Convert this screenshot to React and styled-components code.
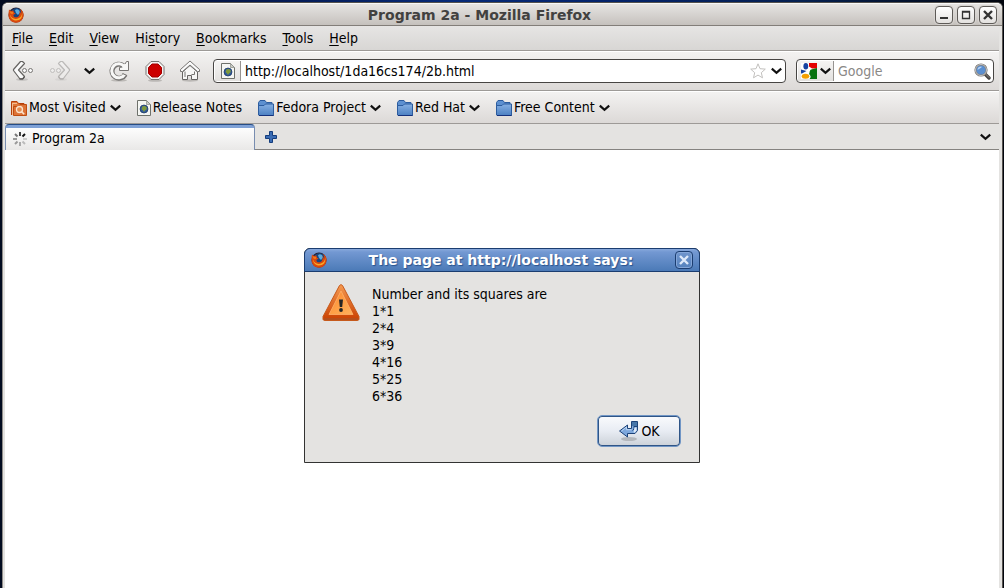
import React from "react";
import styled, { createGlobalStyle, css } from "styled-components";

const GlobalStyle = createGlobalStyle`
  * { box-sizing: border-box; }
  html, body, #root { height: 100%; margin: 0; }
  body, button, input {
    font-family: "DejaVu Sans Condensed", "DejaVu Sans", sans-serif;
    font-size: 14px;
    line-height: 17px;
    color: #000;
  }
  button { padding: 0; border: 0; background: none; }
  input { padding: 0; border: 0; outline: 0; background: none; min-width: 0; }
  svg { display: block; flex: none; }
`;

const Desktop = styled.div`
  min-height: 100%;
  display: flex;
  padding: 2px 1px 0 2px;
  background: linear-gradient(90deg, #020b20, #04184e 25%, #062a78 45%, #04236b 60%, #052050 80%, #01040c);
`;

const Window = styled.div`
  flex: 1;
  display: flex;
  flex-direction: column;
  border: 1px solid #55524e;
  border-left-color: #8e8b88;
  border-bottom: 0;
  border-radius: 6px 6px 0 0;
  background: #e4e3e1;
`;

const TitleBar = styled.header`
  display: flex;
  align-items: center;
  height: 23px;
  padding: 0 5px;
  gap: 5px;
  border-top: 1px solid #f8f8f7;
  border-bottom: 1px solid #827e79;
  border-radius: 5px 5px 0 0;
  background: linear-gradient(#e6e4e2, #c5c1bd);
`;

const WindowTitle = styled.h1`
  flex: 1;
  margin: 0;
  font-family: "DejaVu Sans", sans-serif;
  font-size: 14px;
  line-height: 18px;
  font-weight: bold;
  text-align: center;
  color: #424140;
`;

const WindowButton = styled.button`
  display: grid;
  place-items: center;
  width: 18px;
  height: 18px;
  border: 1px solid #5e5b58;
  border-radius: 4px;
  background: linear-gradient(#fff, #e3e1df);
  box-shadow: 0 0 0 1px #d8d5d2;
`;

const WindowButtons = styled.div`
  display: flex;
  gap: 4px;
`;

const Frame = styled.div`
  flex: 1;
  display: flex;
  flex-direction: column;
  margin: 0 3px 0 2px;
`;

const Bar = styled.div`
  display: flex;
  align-items: center;
  height: ${(p) => p.$height}px;
  border-bottom: 1px solid #9d9a97;
  background: linear-gradient(#f3f2f1, #dcd9d7);
`;

const MenuBar = styled(Bar).attrs({ as: "nav" })`
  background: linear-gradient(#e6e5e4, #d8d6d4);
`;

const MenuItem = styled.button`
  padding: 0 9px 0 7px;
  u { text-underline-offset: 2px; }
`;

const NavBar = styled(Bar)`
  border-top: 1px solid #fff;
  padding: 0 5px 0 6px;
`;

const NavButton = styled.button`
  display: grid;
  place-items: center;
  width: ${(p) => p.$width}px;
  height: 26px;
`;

const Field = styled.form`
  display: flex;
  align-items: center;
  height: 24px;
  border: 1px solid #474543;
  border-radius: 4px;
  background: #fff;
  overflow: hidden;
  ${(p) => (p.$wide ? css`flex: 1;` : css`flex: 0 0 198px; margin-left: 10px;`)}
  input { flex: 1; }
  input::placeholder { color: #8a8886; opacity: 1; }
`;

const FieldButton = styled.button`
  display: flex;
  align-items: center;
  justify-content: center;
  gap: 3px;
  width: ${(p) => p.$width}px;
  height: 20px;
  flex: none;
`;

const Identity = styled(FieldButton)`
  margin: 0 4px 0 1px;
  border-right: 1px solid #979491;
  background: linear-gradient(#f5f4f3, #e3e1df);
`;

const BookmarkBar = styled(Bar)`
  border-top: 1px solid #fff;
  padding-left: 6px;
  gap: 16px;
`;

const Bookmark = styled.button`
  display: flex;
  align-items: center;
  gap: 2px;
`;

const BookmarkLabel = styled.span`
  padding-right: ${(p) => (p.$menu ? 2 : 0)}px;
`;

const TabBar = styled.div`
  display: flex;
  height: 26px;
  background: linear-gradient(#e4e3e1 25px, #858380 25px);
`;

const Tab = styled.button`
  display: flex;
  align-items: center;
  gap: 5px;
  width: 250px;
  padding: 2px 0 0 7px;
  border: 1px solid #788db0;
  border-top: 1px solid #274d86;
  border-bottom: 0;
  border-radius: 4px 4px 0 0;
  background: linear-gradient(#7fa1d6 0 3px, #fdfdfd 3px, #e9e8e7);
`;

const NewTab = styled.button`
  display: grid;
  place-items: center;
  width: 32px;
`;

const AllTabs = styled(NewTab)`
  width: 28px;
  margin-left: auto;
`;

const Page = styled.main`
  flex: 1;
  display: flex;
  justify-content: center;
  align-items: flex-start;
  padding: 98px 0 40px;
  background: #fff;
`;

const Dialog = styled.section`
  width: 396px;
  border: 1px solid #333332;
  border-radius: 6px 6px 0 0;
  background: #e4e3e1;
`;

const DialogTitleBar = styled.header`
  display: flex;
  align-items: center;
  height: 24px;
  margin: -1px -1px 0;
  padding: 0 6px;
  border: 1px solid #1b3d70;
  border-radius: 6px 6px 0 0;
  background: linear-gradient(#88a9dc, #7398d2 3px, #4b7ab7);
`;

const DialogTitle = styled(WindowTitle).attrs({ as: "h2" })`
  color: #fff;
  text-shadow: 1px 1px 1px #28528d;
`;

const DialogClose = styled.button`
  display: grid;
  place-items: center;
  width: 18px;
  height: 18px;
  border: 1px solid #1b3d70;
  border-radius: 4px;
  background: linear-gradient(#7095cd, #5582bd);
  box-shadow: inset 0 0 0 1px #84a6d8;
`;

const DialogBody = styled.div`
  display: flex;
  gap: 12px;
  padding: 12px 17px 0;
`;

const Message = styled.p`
  margin: 2px 0 10px;
  white-space: pre-line;
`;

const DialogActions = styled.footer`
  display: flex;
  justify-content: flex-end;
  padding: 0 18px 15px;
`;

const OkButton = styled.button`
  display: flex;
  align-items: center;
  justify-content: center;
  gap: 1px;
  width: 84px;
  height: 32px;
  border: 1px solid #7196c5;
  border-radius: 5px;
  background: linear-gradient(#fafbfd, #e8ecf3 50%, #cbd1d8);
  box-shadow: inset 0 0 0 1px #2f5587;
`;

const Chevron = () => (
  <svg width="11" height="8" viewBox="0 0 11 8" fill="none" stroke="#111" strokeWidth="2.2">
    <path d="M.8 1.600 5.500 5.800 10.200 1.600" />
  </svg>
);

const Firefox = () => (
  <svg width="16" height="16" viewBox="0 0 16 16">
    <circle cx="8" cy="8" r="7.5" fill="#2a1b27" />
    <circle cx="8.4" cy="7" r="6" fill="#16457f" />
    <path d="M7 3.3C9 1 12 3 12 5.500L10 8 8 6Z" fill="#58abe0" />
    <path d="M1 2.500 3 4c1-1 2.500-.6 3 .1C5 5 5.700 6 7.500 6.200 7 7.500 5.600 7 5.400 8.400c.5 2.400 4 2.500 5.500.3 1-1.400.8-3.400.2-4.700C12 4.500 13 6 13 7c.6-2-.2-4-1.400-5.300C15 3.500 16 6 15.500 9 14.800 13 12 15.700 8 15.700 3.500 15.700.5 12.300.5 8c0-2 .3-4 .5-5.500Z" fill="#d9480f" />
    <path d="M14.200 5.500c.8 5-2 8-6 8C4.800 13.500 2 11 2.100 7.500c.8 3 3 4.500 5.700 4.400 4-.2 6.200-2.500 6.400-6.400Z" fill="#f9a825" />
    <path d="M1.400 4 3 4.800 5.500 5 4.700 7l-2-.3Z" fill="#f27a1a" />
  </svg>
);

const Globe = () => (
  <svg width="14" height="16" viewBox="0 0 14 16">
    <path d="M.5.5h9l4 4v11H.5Z" fill="#f5f6f3" stroke="#6e716b" />
    <path d="M9.500.5v4h4Z" fill="#c9cbc6" stroke="#8a8d87" strokeWidth=".7" />
    <circle cx="7" cy="9" r="4" fill="#315a9c" stroke="#1a335f" strokeWidth=".7" />
    <path d="M5.500 6.300 8 6l1.800 1.500-.3 2L8 10.500 7 12 6 10.500 4.500 9Z" fill="#7f9a3c" />
  </svg>
);

const Folder = () => (
  <svg width="16" height="16" viewBox="0 0 16 16">
    <defs>
      <linearGradient id="folder" x2="0" y2="1"><stop stopColor="#86b0e3" /><stop offset="1" stopColor="#4c80c2" /></linearGradient>
    </defs>
    <path d="M.5 14.500v-12l1.500-2h5l1.500 2H14v4" fill="#5d90d0" stroke="#2c5c9f" />
    <path d="M.5 15V5.500H6L7.500 4h8v11.500H1Z" fill="url(#folder)" stroke="#2c5c9f" />
    <path d="M1 15.500h14.500" stroke="#15317c" />
  </svg>
);

const SmartFolder = () => (
  <svg width="16" height="16" viewBox="0 0 16 16">
    <path d="M.5 15V1.500h5.500l1.500 2h5.500V6" fill="#e07638" stroke="#b6400b" />
    <path d="M2.500 15.500v-9h5L9 4.500h6.500v11Z" fill="#dd7337" stroke="#c04c10" />
    <path d="M1.500 3v12M2 3.500h4" stroke="#f5bd91" />
    <circle cx="8.500" cy="9.500" r="3" fill="#e58c50" stroke="#fbe3cd" strokeWidth="1.300" />
    <path d="m10.600 11.600 2.600 2.600" stroke="#fbe3cd" strokeWidth="1.600" />
  </svg>
);

const Back = ({ faded }) => (
  <svg width="24" height="22" viewBox="0 0 24 22" opacity={faded ? 0.35 : 1}>
    <g transform={faded ? "translate(24 0) scale(-1 1)" : "translate(1 0)"}>
      <ellipse cx="10" cy="19.500" rx="6" ry="1.500" fill="#77757344" />
      <path d="m10.500 1.500 2 2L6.500 10l6 6.500-2 2.500H8L1.500 10.500v-1l7-8Z" fill="#fafafa" stroke="#666462" strokeWidth="1.200" strokeLinejoin="round" />
      <path d="M7.500 18.800h3.300l1.800-2.200" fill="none" stroke="#555351" strokeWidth="1.300" />
      <circle cx="12.500" cy="10.500" r="2" fill="#fafafa" stroke="#777573" />
      <circle cx="18.500" cy="10.500" r="2" fill="#fafafa" stroke="#777573" />
    </g>
  </svg>
);

const Reload = () => (
  <svg width="22" height="22" viewBox="0 0 22 22">
    <ellipse cx="11" cy="20.300" rx="8" ry="1.300" fill="#bbb8b5" />
    <path d="M15.200 5.600A7 7 0 1 0 17.200 14.500" fill="none" stroke="#777573" strokeWidth="5" />
    <path d="M17 4 18.500 1.500H20.500v9H11.500V7.500l3-.5" fill="#f7f7f6" stroke="#777573" strokeLinejoin="round" />
    <path d="M16.500 6.800A7 7 0 1 0 16.800 14.200" fill="none" stroke="#f7f7f6" strokeWidth="3" />
    <path d="m14.500 13.500 4.500 2" stroke="#777573" />
  </svg>
);

const Stop = () => (
  <svg width="22" height="22" viewBox="0 0 22 22">
    <ellipse cx="11" cy="20.500" rx="7" ry="1.300" fill="#bbb8b5" />
    <path d="M7 1.500h8l5 5v8l-5 5H7l-5-5v-8Z" fill="#f3f2f1" stroke="#777573" />
    <path d="M8 4h6l3.500 3.500v6L14 17H8l-3.500-3.500v-6Z" fill="#cc0000" stroke="#a40000" />
  </svg>
);

const Home = () => (
  <svg width="22" height="22" viewBox="0 0 22 22">
    <ellipse cx="11" cy="20.500" rx="8" ry="1.200" fill="#bbb8b5" />
    <path d="M3.500 12v7.500h5v-4h4v4h6V12L11 5.500Z" fill="#f7f7f6" stroke="#666462" />
    <path d="M1.500 11.500v-2L11 1l9.500 8.500v2h-2L11 5l-7.500 6.500Z" fill="#fafafa" stroke="#777573" strokeLinejoin="round" />
    <path d="M6 11.500v5.500M15.500 11.500v3h-3" fill="none" stroke="#777573" />
  </svg>
);

const Star = () => (
  <svg width="16" height="16" viewBox="0 0 16 16">
    <path d="m8 .8 2 4.900 5.300.4-4 3.600 1.200 5.100L8 12.100l-4.500 2.700 1.200-5.100-4-3.600L6 5.700Z" fill="#fff" stroke="#c2c0be" strokeLinejoin="round" />
  </svg>
);

const Google = () => (
  <svg width="16" height="16" viewBox="0 0 16 16">
    <path d="M0 0h16v16H0Z" fill="#fff" />
    <path d="M8 0h8v5.500h-5L8 3.500Z" fill="#e40000" />
    <path d="M16 5v11H8.500c2-2 1-3.500-.5-5 1-1 0-3 2-4.500Z" fill="#087210" />
    <ellipse cx="4.800" cy="3.300" rx="2.400" ry="3.200" fill="#1743a1" />
    <path d="M0 6.500 5.500 8 1 10.500H0Z" fill="#1743a1" />
    <ellipse cx="4.500" cy="13.300" rx="3.800" ry="2.500" fill="#f5a000" />
  </svg>
);

const Magnifier = () => (
  <svg width="17" height="17" viewBox="0 0 17 17">
    <path d="m10.500 10.500 4.500 4.500" stroke="#454341" strokeWidth="3.400" strokeLinecap="round" />
    <path d="m11 10.500 4 4" stroke="#8b8987" strokeLinecap="round" />
    <circle cx="7" cy="7" r="5.600" fill="#5b8fd0" stroke="#777573" strokeWidth="2" />
    <circle cx="7" cy="7" r="5.500" fill="none" stroke="#d9d8d6" strokeWidth=".8" />
    <path d="M3.500 7C3.500 4.500 5 3.500 7.500 3.500c1 1-2 2-4 3.500Z" fill="#b5d1f2" />
  </svg>
);

const Spinner = () => (
  <svg width="14" height="14" viewBox="0 0 14 14" strokeWidth="2">
    <path d="M7 0v4" stroke="#444" />
    <path d="m12 2-2.500 2.500" stroke="#111" />
    <path d="M14 7h-4" stroke="#ccc" />
    <path d="M12 12 9.500 9.500" stroke="#bbb" />
    <path d="M7 14v-4" stroke="#aaa" />
    <path d="m2 12 2.500-2.500" stroke="#999" />
    <path d="M0 7h4" stroke="#999" />
    <path d="m2 2 2.500 2.500" stroke="#777" />
  </svg>
);

const Plus = () => (
  <svg width="12" height="12" viewBox="0 0 12 12">
    <path d="M4.500.5h3v4h4v3h-4v4h-3v-4h-4v-3h4Z" fill="#3a6cb4" stroke="#143d7c" />
  </svg>
);

const Warning = () => (
  <svg width="38" height="38" viewBox="0 0 38 38">
    <defs>
      <linearGradient id="warnEdge" x2="0" y2="1"><stop stopColor="#f59a50" /><stop offset="1" stopColor="#c93f00" /></linearGradient>
      <linearGradient id="warnFill" x2="1" y2="1"><stop stopColor="#f5802c" /><stop offset=".5" stopColor="#ff9f45" /><stop offset="1" stopColor="#fdb25e" /></linearGradient>
    </defs>
    <path d="M17.500 1.500c.6-1 2.400-1 3 0l16.500 31V35c0 1-1 1.500-2 1.500H3C2 36.500 1 36 1 35v-2.500Z" fill="url(#warnEdge)" stroke="#c65a1c" />
    <path d="M2 35h34" stroke="#b5501c" strokeWidth="2" />
    <path d="m19 7 12 23.500H7Z" fill="url(#warnFill)" stroke="#ffb36c" strokeWidth=".8" strokeLinejoin="round" />
    <path d="M17 15.500h4l-.8 7.500h-2.400Z" fill="#252525" />
    <circle cx="19" cy="26" r="1.900" fill="#252525" />
  </svg>
);

const Enter = () => (
  <svg width="22" height="22" viewBox="0 0 22 22">
    <ellipse cx="11" cy="19" rx="8" ry="2" fill="#b3b7bc" />
    <path d="M13.500 1.500h6v9l-2.500 3H9.500v3.500L1.500 11l8-6v3.500h4Z" fill="#7da7dc" stroke="#1d4379" strokeLinejoin="round" />
    <path d="M14 2h5v4h-5Z" fill="#4676a9" />
    <path d="M16 6.500h3M16 6v3l-1.500 1.500" fill="none" stroke="#1d4379" />
    <path d="M16.500 7.500h2v3L17 12.500h-1.500Z" fill="#dfeaf7" />
    <path d="M3.500 11 8.500 7v2.700h5" fill="none" stroke="#bcd5f2" />
  </svg>
);

const Cross = ({ color }) => (
  <svg width="10" height="10" viewBox="0 0 10 10">
    <path d="m1 1 8 8M9 1 1 9" stroke={color} strokeWidth="2.400" />
  </svg>
);

const MENUS = [
  ["", "F", "ile"],
  ["", "E", "dit"],
  ["", "V", "iew"],
  ["Hi", "s", "tory"],
  ["", "B", "ookmarks"],
  ["", "T", "ools"],
  ["", "H", "elp"],
];

const BOOKMARKS = [
  { label: "Most Visited", icon: <SmartFolder />, menu: true },
  { label: "Release Notes", icon: <Globe /> },
  { label: "Fedora Project", icon: <Folder />, menu: true },
  { label: "Red Hat", icon: <Folder />, menu: true },
  { label: "Free Content", icon: <Folder />, menu: true },
];

const MESSAGE = ["Number and its squares are", "1*1", "2*4", "3*9", "4*16", "5*25", "6*36"].join("\n");

export default function App() {
  return (
    <Desktop>
      <GlobalStyle />
      <Window>
        <TitleBar>
          <Firefox />
          <WindowTitle>Program 2a - Mozilla Firefox</WindowTitle>
          <WindowButtons>
            <WindowButton aria-label="Minimize">
              <svg width="10" height="10" viewBox="0 0 10 10"><path d="M1 8h8" stroke="#333" strokeWidth="2" /></svg>
            </WindowButton>
            <WindowButton aria-label="Maximize">
              <svg width="10" height="10" viewBox="0 0 10 10"><path d="M1.500 1.500h7v7h-7ZM1 2h8" fill="none" stroke="#333" strokeWidth="1.300" /></svg>
            </WindowButton>
            <WindowButton aria-label="Close"><Cross color="#333" /></WindowButton>
          </WindowButtons>
        </TitleBar>
        <Frame>
          <MenuBar $height={25}>
            {MENUS.map(([before, key, after]) => (
              <MenuItem key={after}>{before}<u>{key}</u>{after}</MenuItem>
            ))}
          </MenuBar>
          <NavBar $height={40}>
            <NavButton $width={24} aria-label="Back"><Back /></NavButton>
            <NavButton $width={48} aria-label="Forward"><Back faded /></NavButton>
            <NavButton $width={12} aria-label="History list"><Chevron /></NavButton>
            <NavButton $width={48} aria-label="Reload"><Reload /></NavButton>
            <NavButton $width={24} aria-label="Stop"><Stop /></NavButton>
            <NavButton $width={46} aria-label="Home"><Home /></NavButton>
            <Field $wide>
              <Identity type="button" $width={26} aria-label="Site identity"><Globe /></Identity>
              <input aria-label="Address" defaultValue="http://localhost/1da16cs174/2b.html" />
              <FieldButton type="button" $width={18} aria-label="Bookmark this page"><Star /></FieldButton>
              <FieldButton type="button" $width={18} aria-label="Show history"><Chevron /></FieldButton>
            </Field>
            <Field>
              <Identity type="button" $width={36} aria-label="Search engine"><Google /><Chevron /></Identity>
              <input aria-label="Search" placeholder="Google" />
              <FieldButton $width={22} aria-label="Search"><Magnifier /></FieldButton>
            </Field>
          </NavBar>
          <BookmarkBar $height={33}>
            {BOOKMARKS.map(({ label, icon, menu }) => (
              <Bookmark key={label}>{icon}<BookmarkLabel $menu={menu}>{label}</BookmarkLabel>{menu && <Chevron />}</Bookmark>
            ))}
          </BookmarkBar>
          <TabBar>
            <Tab><Spinner /><span>Program 2a</span></Tab>
            <NewTab aria-label="New tab"><Plus /></NewTab>
            <AllTabs aria-label="List all tabs"><Chevron /></AllTabs>
          </TabBar>
          <Page>
            <Dialog role="alertdialog" aria-labelledby="dialog-title" aria-describedby="dialog-message">
              <DialogTitleBar>
                <Firefox />
                <DialogTitle id="dialog-title">The page at http://localhost says:</DialogTitle>
                <DialogClose aria-label="Close dialog"><Cross color="#dfeafa" /></DialogClose>
              </DialogTitleBar>
              <DialogBody>
                <Warning />
                <Message id="dialog-message">{MESSAGE}</Message>
              </DialogBody>
              <DialogActions>
                <OkButton><Enter /><span>OK</span></OkButton>
              </DialogActions>
            </Dialog>
          </Page>
        </Frame>
      </Window>
    </Desktop>
  );
}
